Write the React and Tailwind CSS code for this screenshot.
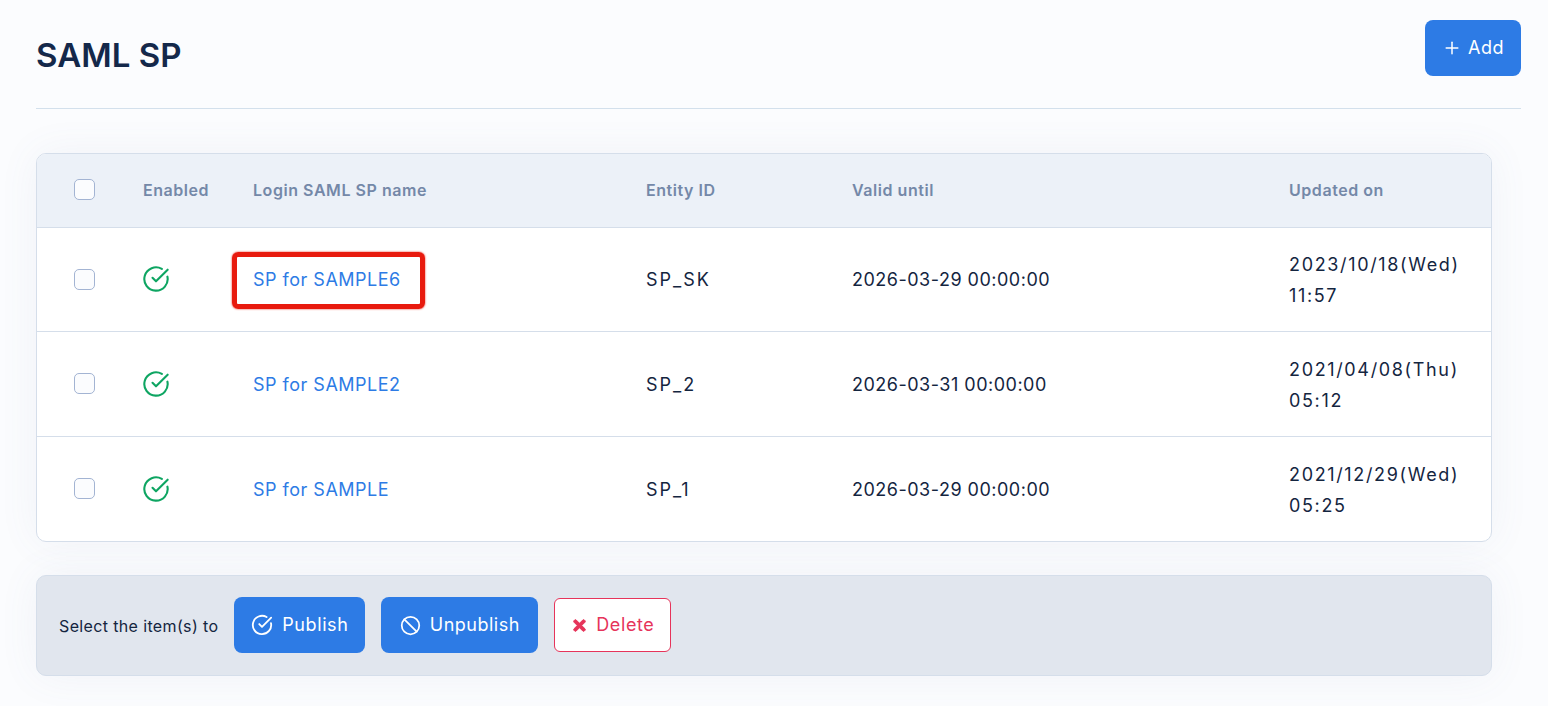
import { CircleCheckBig, Ban, Plus } from 'lucide-react';
import { FaTimes } from 'react-icons/fa';

const rows = [
  { name: 'SP for SAMPLE6', entity: 'SP_SK', valid: '2026-03-29 00:00:00', date: '2023/10/18(Wed)', time: '11:57', marked: true },
  { name: 'SP for SAMPLE2', entity: 'SP_2', valid: '2026-03-31 00:00:00', date: '2021/04/08(Thu)', time: '05:12' },
  { name: 'SP for SAMPLE', entity: 'SP_1', valid: '2026-03-29 00:00:00', date: '2021/12/29(Wed)', time: '05:25' },
];

function Checkbox() {
  return <span className="block w-[21px] h-[21px] ml-[37px] rounded-[5px] border border-[#a3b4d3] bg-[#fbfcfe]" />;
}

export default function App() {
  return (
    <div className="min-h-[706px] bg-[#fbfcfe] pl-9 pr-[27px] pt-5 font-['Inter',sans-serif] text-[#14253f]">
      {/* Header */}
      <div className="flex items-start justify-between h-[89px] border-b border-[#d3e0ec]">
        <h1 className="mt-[14px] text-[33px] leading-[42px] font-semibold text-[#14284a] tracking-[0.05px]">SAML SP</h1>
        <button className="flex items-center justify-center gap-[6px] w-24 h-14 rounded-lg bg-[#2d7be5] text-white text-lg tracking-[0.5px]">
          <Plus className="w-[20px] h-[20px]" strokeWidth={1.8} />
          Add
        </button>
      </div>

      {/* Table */}
      <div className="mt-11 w-[1456px] rounded-[10px] border border-[#d5deea] bg-white overflow-hidden shadow-[0_0_40px_rgba(100,120,160,0.07)]">
        <table className="w-full table-fixed border-collapse">
          <colgroup>
            <col className="w-[106px]" />
            <col className="w-[110px]" />
            <col className="w-[393px]" />
            <col className="w-[206px]" />
            <col className="w-[437px]" />
            <col />
          </colgroup>
          <thead>
            <tr className="h-[73px] bg-[#ecf1f8] text-left text-base text-[#7488a8] tracking-[0.55px]">
              <th className="pb-px"><Checkbox /></th>
              <th className="pb-px font-semibold">Enabled</th>
              <th className="pb-px font-semibold">Login SAML SP name</th>
              <th className="pb-px font-semibold">Entity ID</th>
              <th className="pb-px font-semibold">Valid until</th>
              <th className="pb-px font-semibold">Updated on</th>
            </tr>
          </thead>
          <tbody>
            {rows.map(row => (
              <tr key={row.name} className="h-[104.67px] border-t border-[#d5deea] text-lg tracking-[0.5px]">
                <td><Checkbox /></td>
                <td><CircleCheckBig className="w-[28px] h-[28px] -ml-px text-[#0ea562]" strokeWidth={1.8} /></td>
                <td className="pt-[2px]">
                  <span className="relative inline-block text-[#2d7be5]">
                    {row.name}
                    {row.marked && (
                      <span className="absolute -left-[21px] -right-[24px] -top-[14px] -bottom-[15px] rounded-md border-[5px] border-[#e81a0e] shadow-[0_0_2px_#e81a0e]" />
                    )}
                  </span>
                </td>
                <td className="pt-[2px] tracking-[2px]">{row.entity}</td>
                <td className="pt-[2px]">{row.valid}</td>
                <td className="pt-[2px] leading-[31px] tracking-[1.65px]">
                  {row.date}
                  <br />
                  {row.time}
                </td>
              </tr>
            ))}
          </tbody>
        </table>
      </div>

      {/* Bulk actions */}
      <div className="flex items-center mt-[33px] w-[1456px] h-[101px] pl-[22px] rounded-[10px] border border-[#d5deea] bg-[#e1e6ee] shadow-[0_0_40px_rgba(100,120,160,0.07)]">
        <span className="mt-[2px] text-base mr-4 tracking-[0.36px]">Select the item(s) to</span>
        <button className="flex items-center justify-center gap-[9px] w-[131px] h-14 rounded-lg bg-[#2d7be5] text-white text-lg tracking-[0.6px]">
          <CircleCheckBig className="w-[22px] h-[22px]" strokeWidth={2} />
          Publish
        </button>
        <button className="flex items-center justify-center gap-[9px] ml-4 w-[157px] h-14 rounded-lg bg-[#2d7be5] text-white text-lg tracking-[0.5px]">
          <Ban className="w-[21px] h-[21px]" strokeWidth={2} />
          Unpublish
        </button>
        <button className="flex items-center justify-center gap-2 ml-4 w-[117px] h-[54px] rounded-md border border-[#e6345a] bg-white text-[#e6345a] text-lg tracking-[0.6px]">
          <FaTimes className="w-[17px] h-[17px] stroke-current stroke-[30]" />
          Delete
        </button>
      </div>
    </div>
  );
}
